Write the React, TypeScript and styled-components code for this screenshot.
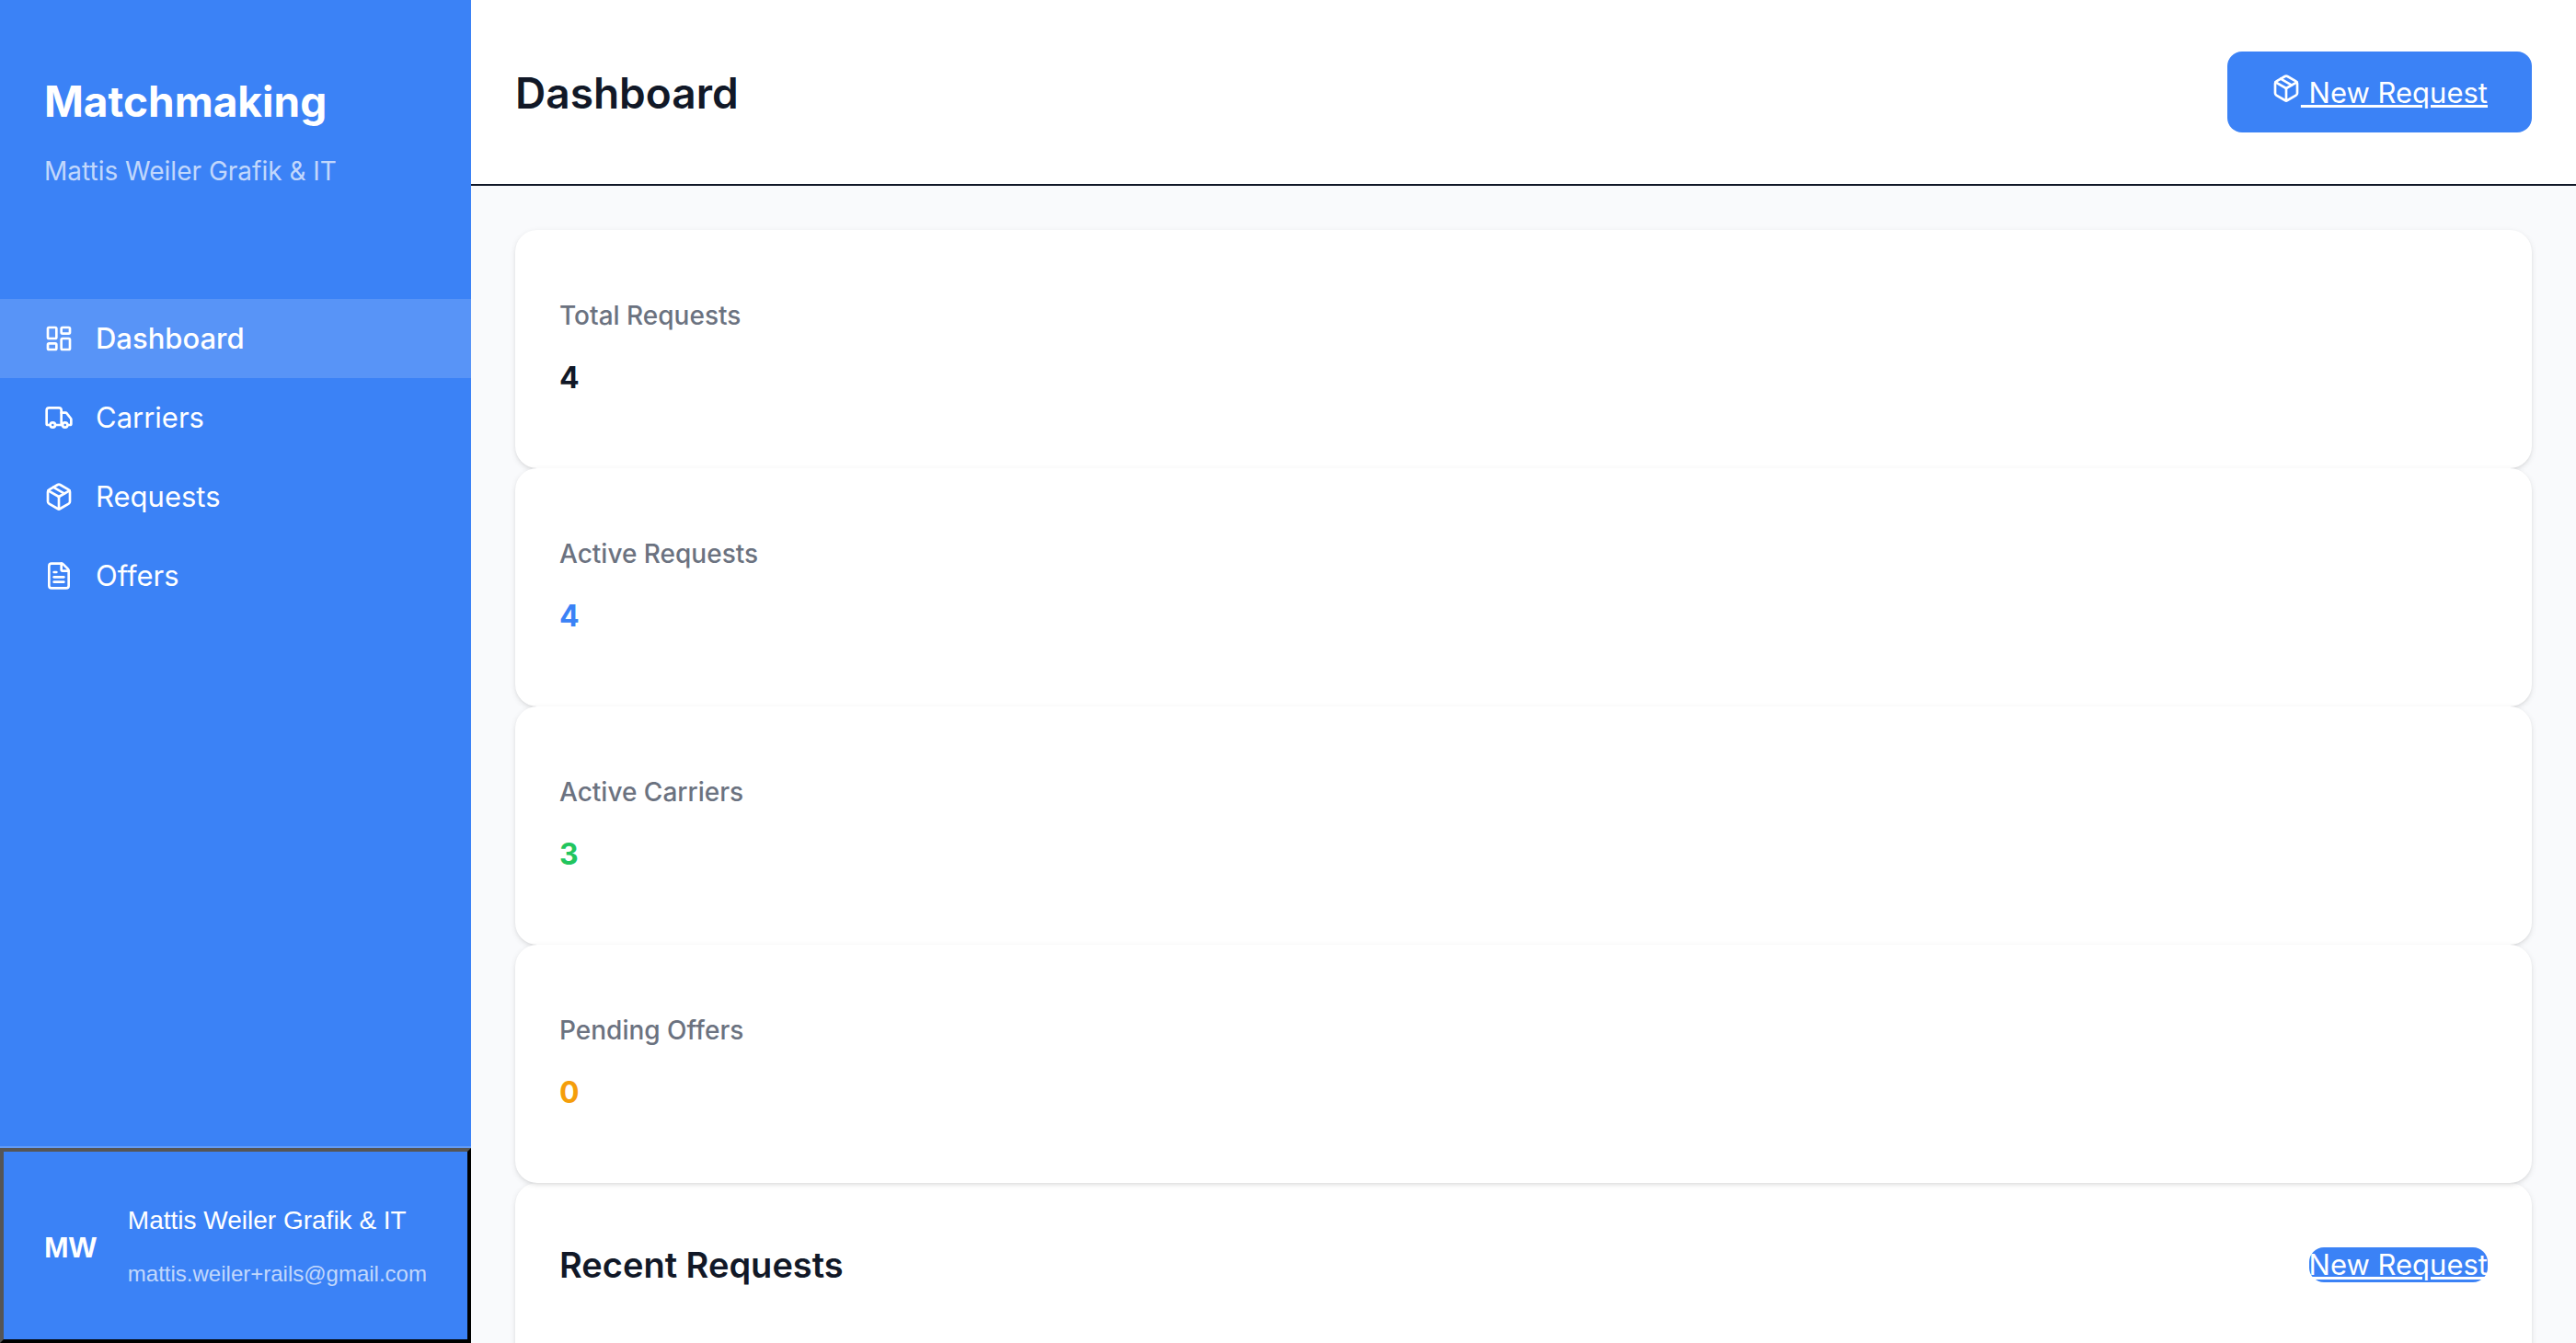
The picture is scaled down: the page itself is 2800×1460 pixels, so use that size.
import React from "react";
import styled, { createGlobalStyle } from "styled-components";
import { FileText, LayoutDashboard, Package, Truck } from "lucide-react";

const GlobalStyle = createGlobalStyle`
  *, *::before, *::after { box-sizing: border-box; }
  body {
    margin: 0;
    background: #f9fafc;
    color: #111827;
    font-family: Inter, "Liberation Sans", sans-serif;
    font-size: 31px;
    line-height: 38px;
  }
`;

const Layout = styled.div`
  display: flex;
  height: 100vh;
`;

const Sidebar = styled.aside`
  display: flex;
  flex-direction: column;
  flex: none;
  width: 512px;
  background: #3b82f6;
  color: #fff;
`;

const Brand = styled.header`
  padding: 81px 48px 122px;
`;

const BrandName = styled.h2`
  margin: 0 0 30px;
  font-size: 46px;
  line-height: 58px;
  font-weight: 700;
`;

const BrandOwner = styled.p`
  margin: 0;
  font-size: 28px;
  line-height: 34px;
  color: rgba(255, 255, 255, 0.7);
`;

const Nav = styled.nav`
  flex: 1;
`;

const NavLink = styled.a<{ $active?: boolean }>`
  display: flex;
  align-items: center;
  gap: 24px;
  padding: 24px 48px;
  color: #fff;
  font-weight: ${(p) => (p.$active ? 500 : 400)};
  text-decoration: none;
  background: ${(p) => (p.$active ? "rgba(255, 255, 255, 0.15)" : "transparent")};
`;

const Account = styled.div`
  border-top: 2px solid rgba(255, 255, 255, 0.2);
`;

const AccountButton = styled.button`
  display: flex;
  align-items: center;
  gap: 34px;
  width: 100%;
  padding: 58px 44px 54px;
  border: 4px solid;
  border-color: #555 #000 #000 #555;
  background: transparent;
  color: #fff;
  font-family: "Liberation Sans", Arial, sans-serif;
  text-align: left;
`;

const Initials = styled.span`
  font-size: 32px;
  line-height: 38px;
  font-weight: 700;
`;

const AccountText = styled.span`
  display: flex;
  flex-direction: column;
  gap: 24px;
`;

const AccountName = styled.span`
  font-size: 28px;
  line-height: 34px;
`;

const AccountEmail = styled.span`
  font-size: 24px;
  line-height: 34px;
  color: rgba(255, 255, 255, 0.7);
`;

const Main = styled.main`
  flex: 1;
  min-width: 0;
  overflow: auto;
  scrollbar-width: none;
`;

const TopBar = styled.header`
  display: flex;
  align-items: flex-start;
  justify-content: space-between;
  padding: 56px 48px;
  border-bottom: 2px solid #111827;
  background: #fff;
`;

const PageTitle = styled.h1`
  margin: 0;
  padding: 16px 0 14px;
  font-size: 46px;
  line-height: 58px;
  font-weight: 600;
`;

const ActionLink = styled.a<{ $padded?: boolean }>`
  padding: ${(p) => (p.$padded ? "24px 48px" : "0")};
  border-radius: 16px;
  background: #3b82f6;
  color: #fff;
  text-decoration-thickness: 3px;
  text-underline-offset: 2px;
`;

const Content = styled.div`
  padding: 48px;
`;

const Card = styled.section`
  border-radius: 24px;
  background: #fff;
  box-shadow: 0 2px 6px rgba(0, 0, 0, 0.1), 0 2px 4px -2px rgba(0, 0, 0, 0.1);
`;

const StatCard = styled(Card)`
  position: relative;
  padding: 76px 48px 80px;
`;

const StatLabel = styled.h3`
  margin: 0 0 32px;
  font-size: 28px;
  line-height: 34px;
  font-weight: 500;
  color: #6b7280;
`;

const StatValue = styled.p<{ $color: string }>`
  margin: 0;
  font-size: 32px;
  font-weight: 700;
  line-height: 37px;
  color: ${(p) => p.$color};
`;

const RecentCard = styled(Card)`
  min-height: 320px;
  padding: 64px 48px;
`;

const RecentHeader = styled.div`
  display: flex;
  align-items: center;
  justify-content: space-between;
`;

const RecentTitle = styled.h2`
  margin: 0;
  font-size: 38px;
  line-height: 50px;
  font-weight: 600;
`;

const navItems = [
  { label: "Dashboard", Icon: LayoutDashboard, active: true },
  { label: "Carriers", Icon: Truck },
  { label: "Requests", Icon: Package },
  { label: "Offers", Icon: FileText },
];

const stats = [
  { label: "Total Requests", value: 4, color: "#111827" },
  { label: "Active Requests", value: 4, color: "#3b82f6" },
  { label: "Active Carriers", value: 3, color: "#22c55e" },
  { label: "Pending Offers", value: 0, color: "#f59e0b" },
];

export default function App() {
  return (
    <Layout>
      <GlobalStyle />
      <Sidebar>
        <Brand>
          <BrandName>Matchmaking</BrandName>
          <BrandOwner>Mattis Weiler Grafik &amp; IT</BrandOwner>
        </Brand>
        <Nav>
          {navItems.map(({ label, Icon, active }) => (
            <NavLink key={label} href="#" $active={active}>
              <Icon size={32} aria-hidden />
              {label}
            </NavLink>
          ))}
        </Nav>
        <Account>
          <AccountButton type="button">
            <Initials>MW</Initials>
            <AccountText>
              <AccountName>Mattis Weiler Grafik &amp; IT</AccountName>
              <AccountEmail>mattis.weiler+rails@gmail.com</AccountEmail>
            </AccountText>
          </AccountButton>
        </Account>
      </Sidebar>
      <Main>
        <TopBar>
          <PageTitle>Dashboard</PageTitle>
          <ActionLink href="#" $padded>
            <Package size={32} aria-hidden /> New Request
          </ActionLink>
        </TopBar>
        <Content>
          {stats.map((s) => (
            <StatCard key={s.label}>
              <StatLabel>{s.label}</StatLabel>
              <StatValue $color={s.color}>{s.value}</StatValue>
            </StatCard>
          ))}
          <RecentCard>
            <RecentHeader>
              <RecentTitle>Recent Requests</RecentTitle>
              <ActionLink href="#">New Request</ActionLink>
            </RecentHeader>
          </RecentCard>
        </Content>
      </Main>
    </Layout>
  );
}
